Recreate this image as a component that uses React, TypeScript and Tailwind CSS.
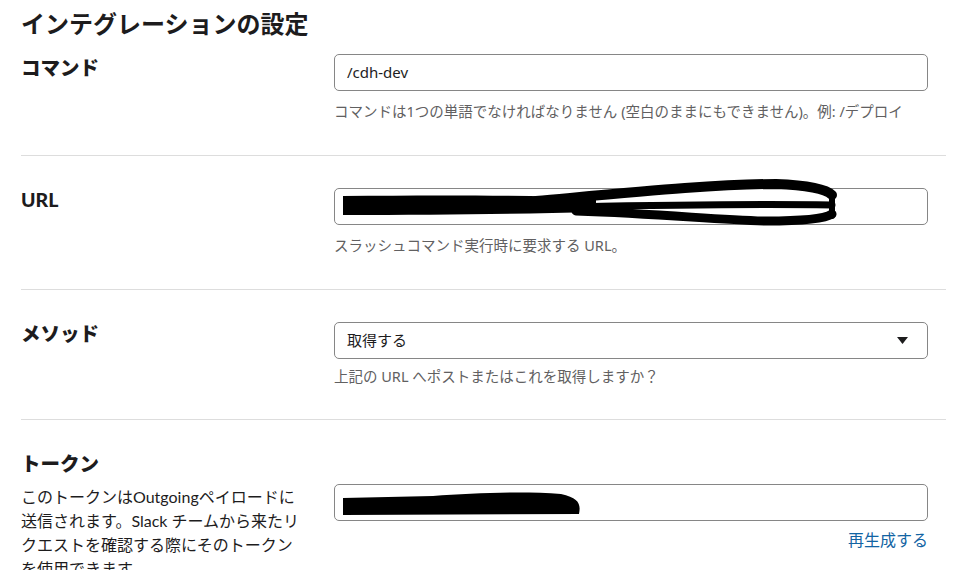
import React from "react";

const lato = { fontFamily: 'Lato, "Noto Sans CJK JP", sans-serif' };
const noto = { fontFamily: '"Noto Sans", "Noto Sans CJK JP", sans-serif' };

function Label({ children }: { children: React.ReactNode }) {
  return (
    <div className="text-[19.5px] font-black leading-[24px] text-[#1d1c1d]" style={lato}>
      {children}
    </div>
  );
}

function Help({ children, className = "" }: { children: React.ReactNode; className?: string }) {
  return (
    <div className={"text-[14.5px] leading-[20px] text-[#616061] " + className} style={noto}>
      {children}
    </div>
  );
}

function Box({ children }: { children?: React.ReactNode }) {
  return (
    <div
      className="relative h-[37px] border border-[#868686] rounded-[5px] pl-[12px] pr-[18px] flex items-center text-[15px] text-[#1d1c1d]"
      style={noto}
    >
      {children}
    </div>
  );
}

export default function App() {
  return (
    <div className="w-[971px] h-[570px] overflow-hidden bg-white">
      <div className="w-[925px] ml-[21px] pt-[6px]">
        <h1 className="text-[24px] font-bold leading-[36px] text-[#1d1c1d]" style={lato}>
          インテグレーションの設定
        </h1>

        {/* Command */}
        <div className="grid grid-cols-[313px_594px] pt-[12px] pb-[34px] border-b border-[#dddddd]">
          <div className="pt-[2px]">
            <Label>コマンド</Label>
          </div>
          <div>
            <Box>/cdh-dev</Box>
            <Help className="mt-[10px]">
              コマンドは1つの単語でなければなりません (空白のままにもできません)。例: /デプロイ
            </Help>
          </div>
        </div>

        {/* URL */}
        <div className="grid grid-cols-[313px_594px] pt-[32px] pb-[34px] border-b border-[#dddddd]">
          <Label>URL</Label>
          <div>
            <Box>
              <svg
                className="absolute left-[1px] top-[-9px] overflow-visible"
                width="505"
                height="48"
                viewBox="0 0 505 48"
              >
                <path
                  d="M7,16 C100,15 180,15 260,18 L260,32 C180,34 100,35 7,35 Z"
                  fill="#000"
                />
                <path
                  d="M200,21 C300,12 380,4 440,4 C470,5 490,9 496,15"
                  stroke="#000"
                  strokeWidth="10"
                  fill="none"
                  strokeLinecap="round"
                />
                <path
                  d="M240,27 C330,25 420,24 496,25"
                  stroke="#000"
                  strokeWidth="7"
                  fill="none"
                  strokeLinecap="round"
                />
                <path
                  d="M240,31 C330,34 380,40 430,41 C470,41 490,38 496,34"
                  stroke="#000"
                  strokeWidth="9"
                  fill="none"
                  strokeLinecap="round"
                />
                <path
                  d="M496,14 L496,36"
                  stroke="#000"
                  strokeWidth="6"
                  fill="none"
                  strokeLinecap="round"
                />
              </svg>
            </Box>
            <Help className="mt-[10px]">スラッシュコマンド実行時に要求する URL。</Help>
          </div>
        </div>

        {/* Method */}
        <div className="grid grid-cols-[313px_594px] pt-[32px] pb-[33px] border-b border-[#dddddd]">
          <Label>メソッド</Label>
          <div>
            <Box>
              <span className="flex-1">取得する</span>
              <svg width="11" height="7" viewBox="0 0 11 7" className="mr-[1px]">
                <path d="M0,0 L11,0 L5.5,7 Z" fill="#1d1c1d" />
              </svg>
            </Box>
            <Help className="mt-[7px]">上記の URL へポストまたはこれを取得しますか？</Help>
          </div>
        </div>

        {/* Token */}
        <div className="grid grid-cols-[313px_594px] pt-[32px]">
          <div>
            <Label>トークン</Label>
            <div className="mt-[9px] text-[16px] leading-[24px] text-[#1d1c1d] whitespace-nowrap" style={lato}>
              このトークンはOutgoingペイロードに
              <br />
              送信されます。Slack チームから来たリ
              <br />
              クエストを確認する際にそのトークン
              <br />
              を使用できます。
            </div>
          </div>
          <div className="pt-[32px]">
            <Box>
              <svg
                className="absolute left-[8px] top-[4px] overflow-visible"
                width="240"
                height="26"
                viewBox="0 0 240 26"
              >
                <path
                  d="M0,9 L0,26 L236,25 C238,15 236,9 218,5 C180,2 130,4 90,7 L0,9 Z"
                  fill="#000"
                />
              </svg>
            </Box>
            <div className="mt-[9px] flex justify-end">
              <span className="text-[16px] leading-[20px] text-[#1264a3]" style={noto}>
                再生成する
              </span>
            </div>
          </div>
        </div>
      </div>
    </div>
  );
}
